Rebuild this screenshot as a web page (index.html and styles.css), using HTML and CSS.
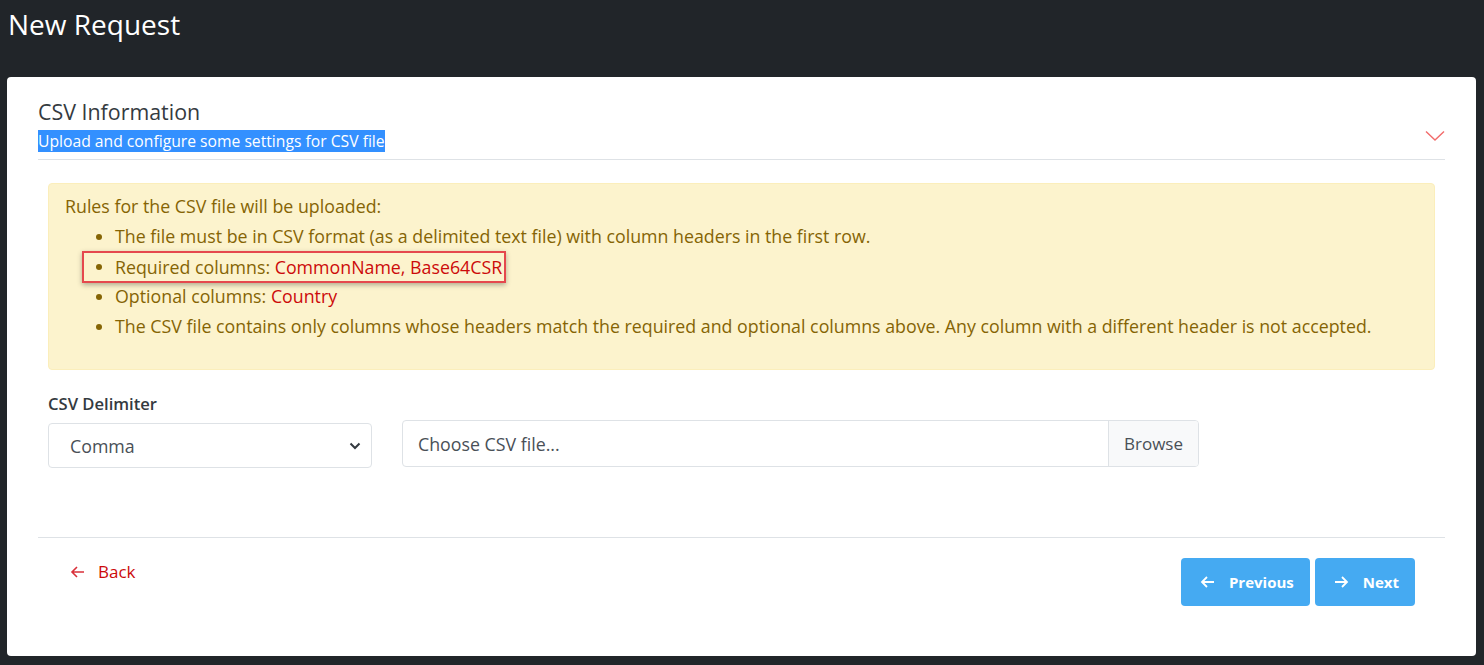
FILE: index.html
```html
<!DOCTYPE html>
<html lang="en">
<head>
<meta charset="utf-8">
<title>New Request</title>
<link rel="stylesheet" href="styles.css">
</head>
<body>
<h1 class="page-title">New Request</h1>
<main class="card">
  <div class="card-head">
    <div class="head-text">
      <h2 class="section-title">CSV Information</h2>
      <div class="section-sub"><span class="selected">Upload and configure some settings for CSV file</span></div>
    </div>
    <svg class="chevron" width="20" height="12" viewBox="0 0 20 12"><polyline points="1,1.5 10,10 19,1.5" fill="none" stroke="#f26b6b" stroke-width="1.4"/></svg>
  </div>
  <div class="card-body">
    <div class="alert">
      <div class="alert-title">Rules for the CSV file will be uploaded:</div>
      <ul class="rules">
        <li>The file must be in CSV format (as a delimited text file) with column headers in the first row.</li>
        <li><span class="annot">Required columns: <span class="red">CommonName, Base64CSR</span></span></li>
        <li>Optional columns: <span class="red">Country</span></li>
        <li>The CSV file contains only columns whose headers match the required and optional columns above. Any column with a different header is not accepted.</li>
      </ul>
    </div>
    <div class="form-row">
      <div class="field-delim">
        <label class="label">CSV Delimiter</label>
        <div class="select">
          <span>Comma</span>
          <svg width="12" height="8" viewBox="0 0 12 8"><polyline points="1.5,1.5 6,6 10.5,1.5" fill="none" stroke="#343a40" stroke-width="2"/></svg>
        </div>
      </div>
      <div class="file-input">
        <span class="file-text">Choose CSV file...</span>
        <span class="browse">Browse</span>
      </div>
    </div>
  </div>
  <div class="card-foot">
    <a class="back" href="#"><svg width="15" height="14" viewBox="0 0 15 14"><path d="M14 7H2M7 2L2 7l5 5" fill="none" stroke="#d9303a" stroke-width="1.6"/></svg><span>Back</span></a>
    <div class="nav-buttons">
      <button class="btn"><svg width="15" height="14" viewBox="0 0 15 14"><path d="M14 7H2M7 2L2 7l5 5" fill="none" stroke="#fff" stroke-width="1.8"/></svg>Previous</button>
      <button class="btn"><svg width="15" height="14" viewBox="0 0 15 14"><path d="M1 7h12M8 2l5 5-5 5" fill="none" stroke="#fff" stroke-width="1.8"/></svg>Next</button>
    </div>
  </div>
</main>
</body>
</html>
```
FILE: styles.css
```css
* { box-sizing: border-box; }
html, body { height: 100%; }
body {
  margin: 0;
  background: #212529;
  font-family: "Open Sans", "Noto Sans", sans-serif;
  color: #343a40;
  overflow: hidden;
}
.page-title {
  margin: 0;
  padding: 6px 8px 0;
  height: 77px;
  font-size: 28px;
  font-weight: 400;
  color: #fff;
  line-height: 36px;
}
.card {
  margin: 0 8px 0 7px;
  height: 579px;
  background: #fff;
  border-radius: 4px;
  padding: 0 31px;
}
.card-head {
  display: flex;
  justify-content: space-between;
  align-items: flex-start;
  padding-top: 20px;
  border-bottom: 1px solid #dee2e6;
  padding-bottom: 7px;
}
.section-title {
  margin: 0;
  font-size: 21.4px;
  font-weight: 400;
  line-height: 30px;
  color: #343a40;
}
.section-sub {
  margin-top: 3px;
  font-size: 15.7px;
  line-height: 22px;
}
.selected {
  background: #3390ff;
  color: #fff;
}
.chevron { margin-top: 33px; margin-right: 0; }
.card-body { padding: 23px 10px 0; }
.alert {
  background: #fcf3cd;
  border: 1px solid #fbeebb;
  border-radius: 4px;
  color: #856404;
  padding: 7px 16px 28px;
  font-size: 17.8px;
  line-height: 30px;
}
.alert-title { line-height: 30px; }
.rules {
  margin: 0;
  padding-left: 50px;
}
.red { color: #cc0a0a; }
.annot {
  display: inline-block;
  margin: -4px 0 -2px -33px;
  padding: 0 2px 0 31px;
  border: 2px solid #e5484d;
  box-shadow: 0 2px 5px rgba(0,0,0,0.3);
  line-height: 28px;
  vertical-align: middle;
}
.form-row {
  display: flex;
  align-items: flex-end;
  gap: 30px;
  margin-top: 23px;
}
.field-delim { width: 324px; }
.label {
  display: block;
  font-size: 16.6px;
  font-weight: 600;
  line-height: 22px;
  margin-bottom: 8px;
}
.select {
  display: flex;
  justify-content: space-between;
  align-items: center;
  height: 45px;
  border: 1px solid #dee2e6;
  border-radius: 4px;
  padding: 0 10px 0 21px;
  font-size: 17.8px;
  color: #495057;
}
.file-input {
  display: flex;
  width: 797px;
  height: 47px;
  margin-bottom: 1px;
  border: 1px solid #dee2e6;
  border-radius: 4px;
  font-size: 17.8px;
  color: #495057;
}
.file-text {
  flex: 1;
  display: flex;
  align-items: center;
  padding-left: 15px;
}
.browse {
  display: flex;
  align-items: center;
  padding: 0 15px;
  background: #f8f9fa;
  border-left: 1px solid #dee2e6;
  border-radius: 0 3px 3px 0;
  font-size: 17px;
}
.card-foot {
  margin-top: 69px;
  border-top: 1px solid #dee2e6;
  display: flex;
  justify-content: space-between;
  align-items: flex-start;
  padding: 20px 30px 0 32px;
}
.back {
  display: flex;
  align-items: center;
  gap: 13px;
  color: #cc0a0a;
  text-decoration: none;
  font-size: 17px;
  line-height: 28px;
  margin-top: 0;
}
.nav-buttons {
  display: flex;
  gap: 5px;
  margin-top: 0;
}
.btn {
  display: flex;
  align-items: center;
  gap: 14px;
  height: 48px;
  padding: 0 16px 0 19px;
  background: #45aaf2;
  border: 0;
  border-radius: 4px;
  color: #fff;
  font-family: inherit;
  font-size: 15px;
  font-weight: 700;
}
```
